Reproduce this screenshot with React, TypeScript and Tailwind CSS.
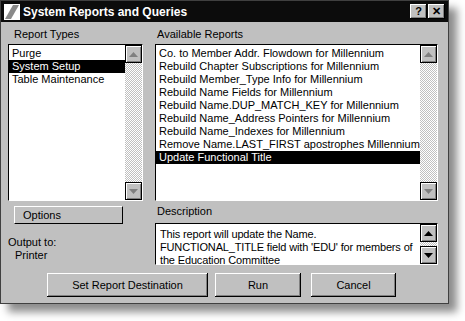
import React from 'react';

const reportTypes = ['Purge', 'System Setup', 'Table Maintenance'];
const reports = [
  'Co. to Member Addr. Flowdown for Millennium',
  'Rebuild Chapter Subscriptions for Millennium',
  'Rebuild Member_Type Info for Millennium',
  'Rebuild Name Fields for Millennium',
  'Rebuild Name.DUP_MATCH_KEY for Millennium',
  'Rebuild Name_Address Pointers for Millennium',
  'Rebuild Name_Indexes for Millennium',
  'Remove Name.LAST_FIRST apostrophes Millennium',
  'Update Functional Title',
];

const listFont = { fontFamily: '"Liberation Sans", Arial, sans-serif' };

function Arrow({ dir, dark }: { dir: 'up' | 'down'; dark?: boolean }) {
  return (
    <div className="flex h-[18px] w-[17px] items-center justify-center border border-black bg-[#c0c0c0] shadow-[inset_1px_1px_#fff,inset_-1px_-1px_#808080]">
      <svg width="9" height="5" viewBox="0 0 9 5">
        {dir === 'up' ? (
          <polygon points="4.5,0 9,5 0,5" fill={dark ? '#000' : '#808080'} />
        ) : (
          <polygon points="0,0 9,0 4.5,5" fill={dark ? '#000' : '#808080'} />
        )}
      </svg>
    </div>
  );
}

function ScrollTrack({ dark }: { dark?: boolean }) {
  return (
    <div className="flex w-[17px] flex-col justify-between bg-[repeating-conic-gradient(#c0c0c0_0%_25%,#fff_0%_50%)] bg-[length:2px_2px]">
      <Arrow dir="up" dark={dark} />
      <Arrow dir="down" dark={dark} />
    </div>
  );
}

function ListBox({ items, selected }: { items: string[]; selected: number }) {
  return (
    <div className="flex h-[157px] border border-black border-b-white border-r-white bg-white">
      <div className="flex-1 overflow-hidden pt-[2px]">
        {items.map((it, i) => (
          <div
            key={it}
            className={`h-[13px] whitespace-nowrap pl-[3px] text-[11px] leading-[13px] ${
              i === selected ? 'bg-black text-white' : 'text-black'
            }`}
          >
            {it}
          </div>
        ))}
      </div>
      <ScrollTrack />
    </div>
  );
}

function WinButton({ children, width }: { children: React.ReactNode; width: string }) {
  return (
    <button
      className={`${width} h-[24px] bg-[#c0c0c0] text-[11px] text-black shadow-[inset_-1px_-1px_#000,inset_1px_1px_#fff,inset_-2px_-2px_#808080]`}
    >
      {children}
    </button>
  );
}

export default function App() {
  return (
    <div className="h-[321px] w-[465px] bg-white" style={listFont}>
      <div className="flex h-[304px] w-[449px] flex-col border border-[#404040] bg-[#c0c0c0] shadow-[8px_8px_8px_rgba(0,0,0,0.45)]">
        {/* Title bar */}
        <div className="flex h-[21px] items-center bg-[#0c0c0c] px-[3px]">
          <svg width="16" height="16" viewBox="0 0 16 16" className="mr-[3px]">
            <rect x="0" y="0" width="16" height="16" fill="#fff" />
            <polygon points="9,1 15,1 7,15 1,15" fill="#8a8a8a" />
          </svg>
          <span className="text-[12px] font-bold text-white">System Reports and Queries</span>
          <div className="ml-auto flex gap-[1px]">
            <div className="flex h-[15px] w-[17px] items-center justify-center bg-[#c0c0c0] text-[11px] font-bold leading-none text-black shadow-[inset_-1px_-1px_#000,inset_1px_1px_#fff,inset_-2px_-2px_#808080]">
              ?
            </div>
            <div className="flex h-[15px] w-[17px] items-center justify-center bg-[#c0c0c0] text-[11px] font-bold leading-none text-black shadow-[inset_-1px_-1px_#000,inset_1px_1px_#fff,inset_-2px_-2px_#808080]">
              ✕
            </div>
          </div>
        </div>

        {/* Body */}
        <div className="flex flex-1 flex-col px-[7px] pt-[6px] text-[11px] text-black">
          <div className="flex gap-[12px]">
            <div className="flex w-[135px] flex-col">
              <div className="h-[16px] pl-[6px] leading-[12px]">Report Types</div>
              <ListBox items={reportTypes} selected={1} />
              <button className="ml-[6px] mt-[5px] h-[18px] w-[109px] border border-black border-l-white border-t-white pl-[8px] text-left leading-[14px]">
                Options
              </button>
              <div className="mt-[12px] leading-[13px]">Output to:</div>
              <div className="pl-[7px] leading-[13px]">Printer</div>
            </div>
            <div className="flex w-[283px] flex-col">
              <div className="h-[16px] pl-[2px] leading-[12px]">Available Reports</div>
              <ListBox items={reports} selected={8} />
              <div className="mt-[4px] h-[18px] pl-[2px] leading-[12px]">Description</div>
              <div className="flex h-[42px] border border-black border-b-white border-r-white bg-white">
                <div className="flex-1 overflow-hidden whitespace-nowrap pl-[4px] pt-[4px] leading-[13px] tracking-[-0.15px]">
                  This report will update the Name.
                  <br />
                  FUNCTIONAL_TITLE field with 'EDU' for members of
                  <br />
                  the Education Committee
                </div>
                <ScrollTrack dark />
              </div>
            </div>
          </div>
          <div className="mt-[8px] flex pl-[39px]">
            <WinButton width="w-[161px]">Set Report Destination</WinButton>
            <div className="w-[7px]" />
            <WinButton width="w-[86px]">Run</WinButton>
            <div className="w-[10px]" />
            <WinButton width="w-[85px]">Cancel</WinButton>
          </div>
        </div>
      </div>
    </div>
  );
}
